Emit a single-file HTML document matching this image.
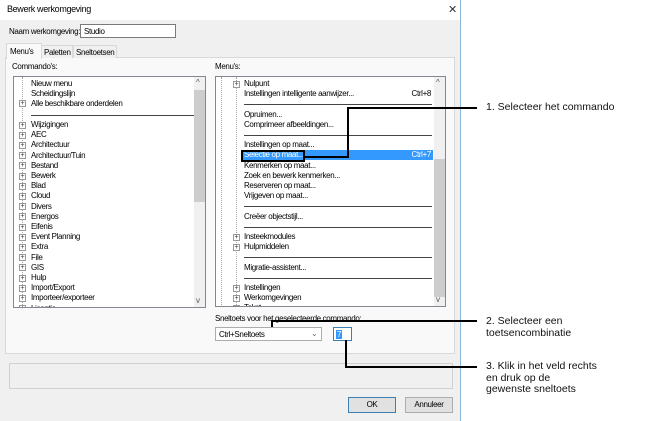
<!DOCTYPE html><html><head><style>
body{margin:0;width:647px;height:421px;background:#fff;position:relative;overflow:hidden;font-family:"Liberation Sans",sans-serif;font-size:8px;letter-spacing:-0.35px;color:#000}
.a{position:absolute;white-space:nowrap}
.box{position:absolute;border:1px solid #828790;background:#fff;box-sizing:border-box}
.r{position:absolute;left:28px;height:10px;line-height:10px;white-space:nowrap}
.k{position:absolute;right:14px;height:10px;line-height:10px}
.pl{position:absolute;width:7px;height:7px;border:1px solid #999;box-sizing:border-box;background:#fff;font-size:7px;line-height:5px;text-align:center;color:#333;letter-spacing:0}
.sep{position:absolute;height:1px;background:#444}
.sb{position:absolute;width:11px;background:#f0f0f0}
.th{position:absolute;left:0;width:11px;background:#cdcdcd}
.ln{position:absolute;background:#000}
.ann{position:absolute;left:486px;font-size:10.5px;line-height:11.5px;color:#111;letter-spacing:0}
</style></head><body>
<div class="a" style="left:0;top:0;width:460px;height:421px;background:#f0f0f0;border-right:1px solid #8ab8dc"></div>
<div class="a" style="left:0;top:0;width:460px;height:20px;background:#fff"></div>
<div class="a" style="left:7px;top:4px;font-size:9px">Bewerk werkomgeving</div>
<div class="a" style="left:448px;top:3px;font-size:11px;color:#333">✕</div>
<div class="a" style="left:9px;top:27px">Naam werkomgeving:</div>
<div class="box" style="left:80px;top:24px;width:96px;height:14px;border-color:#7a7a7a"><span class="a" style="left:3px;top:2px">Studio</span></div>
<div class="a" style="left:5px;top:57px;width:448px;height:295px;border:1px solid #d9d9d9;background:#f9f9f9"></div>
<div class="a" style="left:6px;top:43px;width:34px;height:15px;background:#f9f9f9;border:1px solid #d9d9d9;border-bottom:none"></div>
<div class="a" style="left:10px;top:47px">Menu's</div>
<div class="a" style="left:41px;top:45px;width:30px;height:12px;border:1px solid #d9d9d9;border-bottom:none;background:#f0f0f0"></div>
<div class="a" style="left:44px;top:48px">Paletten</div>
<div class="a" style="left:73px;top:45px;width:42px;height:12px;border:1px solid #d9d9d9;border-bottom:none;background:#f0f0f0"></div>
<div class="a" style="left:76px;top:48px">Sneltoetsen</div>
<div class="a" style="left:12px;top:62px">Commando's:</div>
<div class="a" style="left:215px;top:62px">Menu's:</div>

<div class="box" style="left:13px;top:76px;width:193px;height:232px;overflow:hidden">
<div class="sb" style="left:180px;top:0;height:230px"><div class="th" style="top:13px;height:112px"></div><span class="a" style="left:2px;top:1px;color:#555">^</span><span class="a" style="left:2px;top:219px;color:#555">v</span></div>
<div class="a" style="left:8px;top:0;width:0;height:230px;border-left:1px dotted #aaa"></div>
<div class="r" style="left:17px;top:2px">Nieuw menu</div>
<div class="r" style="left:17px;top:12px">Scheidingslijn</div>
<div class="pl" style="left:5px;top:23px">+</div><div class="r" style="left:17px;top:22px">Alle beschikbare onderdelen</div>
<div class="sep" style="left:17px;top:38px;width:163px"></div>
<div id="L"></div>
</div>

<div class="box" style="left:215px;top:76px;width:231px;height:231px;overflow:hidden">
<div class="sb" style="left:218px;top:0;height:229px"><div class="th" style="top:82px;height:138px"></div><span class="a" style="left:2px;top:1px;color:#555">^</span><span class="a" style="left:2px;top:218px;color:#555">v</span></div>
<div class="a" style="left:5px;top:0;height:230px;border-left:1px dotted #aaa"></div>
<div class="a" style="left:20px;top:0;height:230px;border-left:1px dotted #aaa"></div>
<div class="a" style="left:25px;top:73px;width:192px;height:10px;background:#3399ff"></div>
<div id="R"></div>
</div>

<div class="a" style="left:215px;top:314px">Sneltoets voor het geselecteerde commando:</div>
<div class="box" style="left:215px;top:327px;width:107px;height:14px;border-color:#acacac"><span class="a" style="left:3px;top:2px">Ctrl+Sneltoets</span><span class="a" style="left:95px;top:1px;color:#666">⌄</span></div>
<div class="box" style="left:333px;top:327px;width:19px;height:14px;border-color:#3c7fb1"><span class="a" style="left:2px;top:2px;background:#3399ff;color:#fff;padding:0 1px">7</span></div>
<div class="a" style="left:9px;top:363px;width:442px;height:24px;border:1px solid #d0d0d0;background:#f0f0f0"></div>
<div class="a" style="left:348px;top:397px;width:46px;height:14px;border:1px solid #3c7fb1;background:#e1e1e1;text-align:center;line-height:14px">OK</div>
<div class="a" style="left:405px;top:397px;width:46px;height:14px;border:1px solid #adadad;background:#e1e1e1;text-align:center;line-height:14px">Annuleer</div>

<div class="a" style="left:241px;top:150px;width:60px;height:8px;border:2px solid #000"></div>
<div class="ln" style="left:347px;top:107px;width:2px;height:51px"></div>
<div class="ln" style="left:303px;top:156px;width:46px;height:2px"></div>
<div class="ln" style="left:347px;top:107px;width:130px;height:2px"></div>
<div class="ln" style="left:271px;top:320px;width:2px;height:7px"></div>
<div class="ln" style="left:271px;top:320px;width:206px;height:2px"></div>
<div class="ln" style="left:345px;top:340px;width:2px;height:28px"></div>
<div class="ln" style="left:345px;top:366px;width:132px;height:2px"></div>
<div class="ann" style="top:102px">1. Selecteer het commando</div>
<div class="ann" style="top:316px">2. Selecteer een<br>toetsencombinatie</div>
<div class="ann" style="top:361px">3. Klik in het veld rechts<br>en druk op de<br>gewenste sneltoets</div>

<script>
var L=["Wijzigingen","AEC","Architectuur","Architectuur/Tuin","Bestand","Bewerk","Blad","Cloud","Divers","Energos","Eifenis","Event Planning","Extra","File","GIS","Hulp","Import/Export","Importeer/exporteer","Licentie"],h="";
L.forEach(function(t,i){var y=43+i*10.2;h+='<div class="pl" style="left:5px;top:'+(y+1.5)+'px">+</div><div class="r" style="left:17px;top:'+y+'px">'+t+'</div>';});
document.getElementById("L").outerHTML=h;
var R=[["p","Nulpunt"],["t","Instellingen intelligente aanwijzer...","Ctrl+8"],["s"],["t","Opruimen..."],["t","Comprimeer afbeeldingen..."],["s"],["t","Instellingen op maat..."],["h","Selectie op maat...","Ctrl+7"],["t","Kenmerken op maat..."],["t","Zoek en bewerk kenmerken..."],["t","Reserveren op maat..."],["t","Vrijgeven op maat..."],["s"],["t","Creëer objectstijl..."],["s"],["p","Insteekmodules"],["p","Hulpmiddelen"],["s"],["t","Migratie-assistent..."],["s"],["p","Instellingen"],["p","Werkomgevingen"],["p","Tekst"]];h="";
R.forEach(function(e,i){var y=2+i*10.2;if(e[0]=="s"){h+='<div class="sep" style="left:28px;top:'+(y+5)+'px;width:188px"></div>';return;}
var c=e[0]=="h"?"color:#fff;":"";if(e[0]=="p"){h+='<div class="pl" style="left:17px;top:'+(y+1.5)+'px">+</div>';}
h+='<div class="r" style="left:28px;top:'+y+'px;'+c+'">'+e[1]+'</div>';if(e[2])h+='<div class="k" style="top:'+y+'px;'+c+'">'+e[2]+'</div>';});
document.getElementById("R").outerHTML=h;
</script>
</body></html>
